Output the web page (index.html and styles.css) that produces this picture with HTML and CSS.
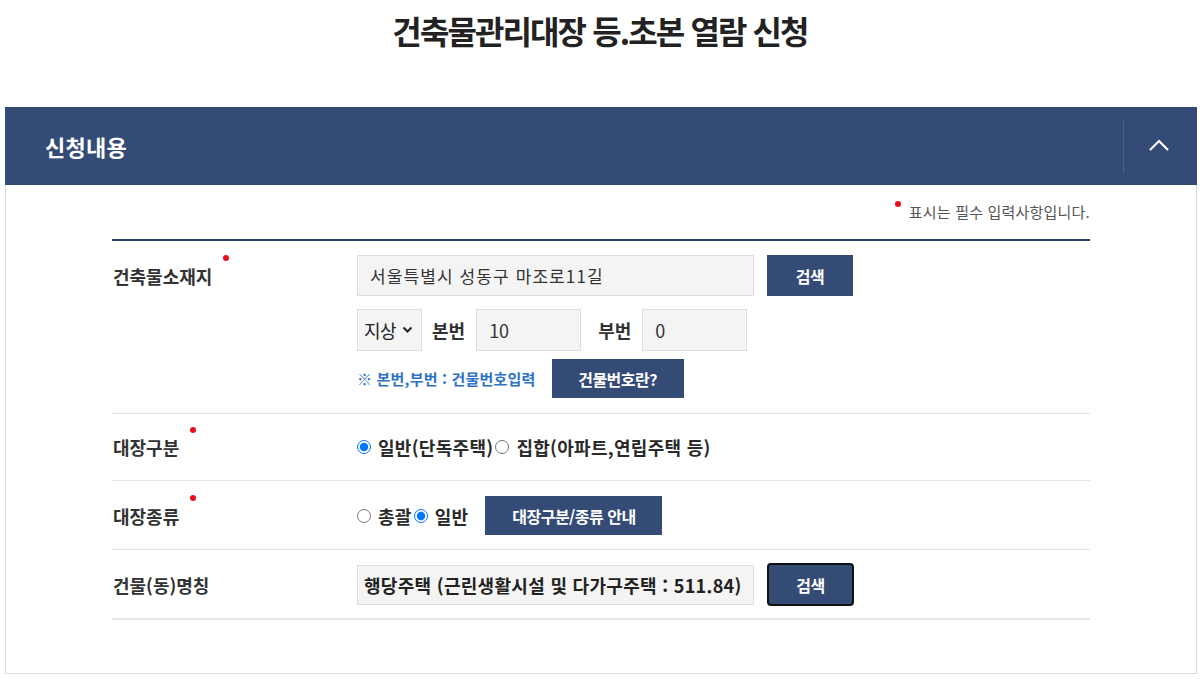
FILE: index.html
```html
<!DOCTYPE html>
<html lang="ko">
<head>
<meta charset="utf-8">
<title>건축물관리대장 등.초본 열람 신청</title>
<link rel="stylesheet" href="styles.css">
</head>
<body>
<h1 class="page-title">건축물관리대장 등.초본 열람 신청</h1>
<section class="panel">
  <div class="panel-head">
    <h2 class="panel-title">신청내용</h2>
    <button class="panel-toggle" type="button" aria-label="접기">
      <svg width="20" height="12" viewBox="0 0 20 12"><polyline points="1,11 10,2 19,11" fill="none" stroke="#fff" stroke-width="2.2"/></svg>
    </button>
  </div>
  <div class="panel-body">
    <p class="req-note"><span class="dot"></span>표시는 필수 입력사항입니다.</p>
    <div class="form">
      <div class="form-row">
        <div class="label l41">건축물소재지<span class="dot"></span></div>
        <div class="field stack">
          <div class="line">
            <input class="text-input wide" type="text" value="서울특별시 성동구 마조로11길">
            <button class="btn btn-search" type="button">검색</button>
          </div>
          <div class="line">
            <div class="select">지상<svg width="11" height="8" viewBox="0 0 11 8"><polyline points="1.5,1.5 5.5,5.5 9.5,1.5" fill="none" stroke="#222" stroke-width="2"/></svg></div>
            <span class="inline-label l1">본번</span>
            <input class="text-input num" type="text" value="10">
            <span class="inline-label l2">부번</span>
            <input class="text-input num" type="text" value="0">
          </div>
          <div class="line">
            <span class="hint">※ 본번,부번 : 건물번호입력</span>
            <button class="btn btn-help" type="button">건물번호란?</button>
          </div>
        </div>
      </div>
      <div class="form-row r2">
        <div class="label l38">대장구분<span class="dot"></span></div>
        <div class="field radios">
          <label class="radio"><input type="radio" name="kind" checked>일반(단독주택)</label>
          <label class="radio"><input type="radio" name="kind">집합(아파트,연립주택 등)</label>
        </div>
      </div>
      <div class="form-row r3">
        <div class="label l39">대장종류<span class="dot"></span></div>
        <div class="field radios">
          <label class="radio"><input type="radio" name="type">총괄</label>
          <label class="radio"><input type="radio" name="type" checked>일반</label>
          <button class="btn btn-guide" type="button">대장구분/종류 안내</button>
        </div>
      </div>
      <div class="form-row r4">
        <div class="label l43">건물(동)명칭</div>
        <div class="field line">
          <input class="text-input wide strong" type="text" value="행당주택 (근린생활시설 및 다가구주택 : 511.84)">
          <button class="btn btn-search focused" type="button">검색</button>
        </div>
      </div>
    </div>
  </div>
</section>
</body>
</html>
```
FILE: styles.css
```css
* { box-sizing: border-box; }
html, body { margin: 0; padding: 0; background: #fff; }
body {
  font-family: "Noto Sans CJK KR", "Noto Sans", sans-serif;
  color: #333;
  width: 1200px;
}
.page-title {
  margin: 10px 0 57px;
  height: 40px;
  line-height: 40px;
  text-align: center;
  font-size: 32px;
  font-weight: 700;
  letter-spacing: -1.9px;
  color: #222;
}
.panel {
  margin: 0 3px 0 5px;
  border: 1px solid #dcdcdc;
  border-top: 0;
  padding-bottom: 53px;
}
.panel-head {
  height: 78px;
  margin: 0 -1px;
  background: #344b76;
  display: flex;
  align-items: center;
  justify-content: space-between;
  padding-left: 40px;
}
.panel-title {
  margin: 0;
  color: #fff;
  font-size: 22px;
  font-weight: 700;
  letter-spacing: 0.3px;
}
.panel-toggle {
  width: 74px;
  height: 53px;
  border: 0;
  border-left: 1px solid #4b5f88;
  background: transparent;
  display: flex;
  align-items: center;
  justify-content: center;
  padding: 0 3px 3px 0;
  cursor: pointer;
}
.panel-body {
  padding: 0 106px;
}
.dot {
  display: inline-block;
  width: 6px;
  height: 6px;
  border-radius: 50%;
  background: #e8101a;
}
.req-note {
  margin: 0;
  padding: 17px 0 17px;
  height: 54px;
  line-height: 20px;
  font-size: 15px;
  color: #555;
  text-align: right;
  letter-spacing: 0.2px;
}
.req-note .dot {
  vertical-align: top;
  margin: -1px 8px 0 0;
}
.form {
  border-top: 2px solid #2c3f63;
}
.form-row {
  display: grid;
  grid-template-columns: 245px 1fr;
  align-items: start;
  border-bottom: 1px solid #e4e4e4;
  padding: 14px 0 15px;
}
.form-row.r2 { padding: 14px 0 14px; }
.form-row.r3 { padding: 15px 0 14px; }
.form-row.r4 { padding: 13px 0 12px; border-bottom: 2px solid #e6e6e6; }
.label {
  display: flex;
  align-items: center;
  padding-left: 1px;
  font-size: 18px;
  font-weight: 700;
  letter-spacing: 0;
  color: #333;
}
.label .dot { align-self: flex-start; margin: 0 0 0 11px; }
.l41 { height: 41px; }
.l38 { height: 38px; }
.l39 { height: 39px; }
.l43 { height: 43px; }
.l41 .dot { margin-top: 0; }
.l38 .dot { margin-top: -1px; }
.l39 .dot { margin-top: -1px; }
.stack { display: flex; flex-direction: column; gap: 13px; }
.stack .line:nth-child(3) { margin-top: -5px; }
.line { display: flex; align-items: center; }
.text-input {
  height: 41px;
  border: 1px solid #dedede;
  background: #f4f4f4;
  padding: 0 12px;
  font-family: inherit;
  font-size: 17px;
  color: #333;
  letter-spacing: 1.1px;
  outline: none;
}
.text-input.wide { width: 397px; }
.text-input.num { width: 105px; height: 42px; font-size: 18px; letter-spacing: 0; }
.text-input.strong { font-weight: 700; font-size: 18px; color: #222; height: 40px; padding: 0 6px; letter-spacing: 0.3px; }
.btn {
  border: 0;
  background: #344b76;
  color: #fff;
  font-family: inherit;
  font-weight: 700;
  font-size: 16px;
  letter-spacing: -0.5px;
  cursor: pointer;
  padding: 0;
}
.btn-search { width: 86px; height: 41px; margin-left: 13px; }
.btn-search.focused {
  width: 87px;
  height: 43px;
  border: 2px solid #111;
  border-radius: 4px;
}
.select {
  width: 65px;
  height: 42px;
  border: 1px solid #dedede;
  background: #f4f4f4;
  display: flex;
  align-items: center;
  gap: 6px;
  padding-left: 6px;
  font-size: 18px;
  letter-spacing: -0.5px;
  color: #222;
}
.inline-label {
  font-size: 18px;
  font-weight: 700;
  color: #333;
  letter-spacing: 0;
}
.l1 { margin: 0 11px 0 10px; }
.l2 { margin: 0 11px 0 17px; }
.hint {
  font-size: 15px;
  font-weight: 700;
  color: #2d72c2;
  letter-spacing: 0.2px;
}
.btn-help { width: 132px; height: 39px; margin-left: 16px; }
.radios {
  display: flex;
  align-items: center;
  height: 38px;
}
.r3 .radios { height: 39px; }
.radio {
  display: inline-flex;
  align-items: center;
  font-size: 18px;
  font-weight: 700;
  color: #2a2a2a;
  letter-spacing: 0.3px;
}
.radio input {
  width: 14px;
  height: 14px;
  margin: 0 7px 0 0;
}
.radio + .radio input { margin-left: 2px; }
.btn-guide { width: 177px; height: 39px; margin-left: 17px; }
```
